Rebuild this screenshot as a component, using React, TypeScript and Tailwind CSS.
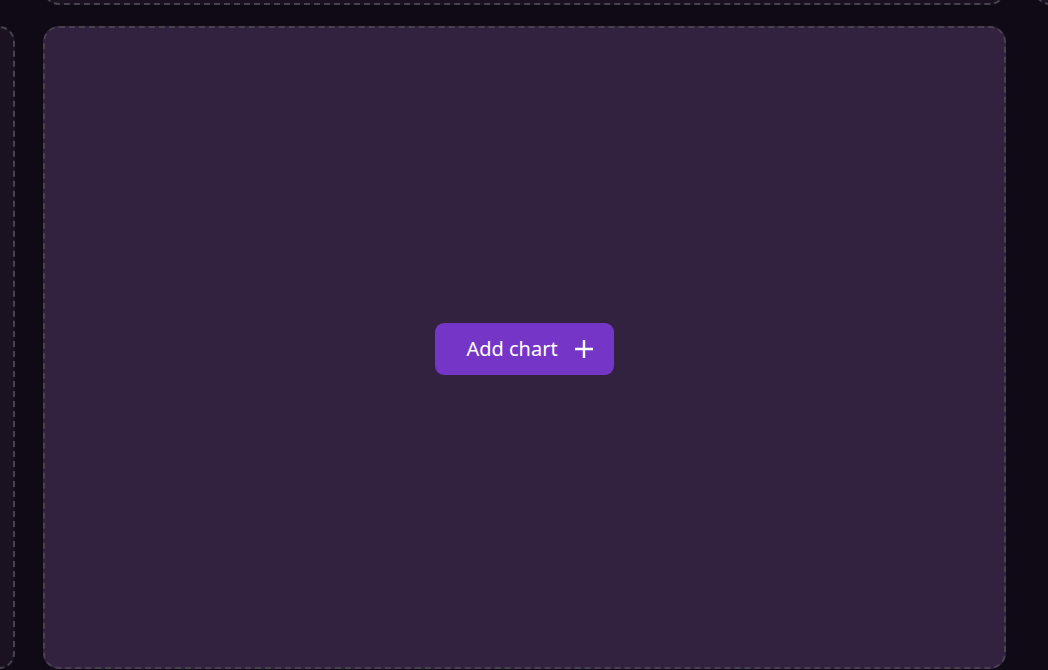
import { useState } from 'react'

function Panel({ className = '', children }: { className?: string; children?: React.ReactNode }) {
  return (
    <div className={`shrink-0 rounded-[16px] border-2 border-dashed border-[#46434e] ${className}`}>
      {children}
    </div>
  )
}

export default function App() {
  const [charts, setCharts] = useState(0)

  return (
    <div className="w-[1048px] h-[670px] overflow-hidden bg-[#100a17] font-['Noto_Sans',sans-serif]">
      <div className="flex flex-col gap-[21px] ml-[-185px] mt-[-200px]">
        <div className="flex gap-[28px] h-[205px]">
          <div className="w-[200px] shrink-0" />
          <Panel className="w-[963px] bg-[#1a1221]" />
          <Panel className="w-[963px] bg-[#1a1221]" />
        </div>
        <div className="flex gap-[28px] h-[643px]">
          <Panel className="w-[200px] bg-[#1a1221]" />
          <Panel className="w-[963px] bg-[#33223f] flex items-center justify-center">
            <button
              type="button"
              onClick={() => setCharts(charts + 1)}
              className="h-[52px] flex items-center gap-[17px] pl-[31px] pr-[21px] rounded-[9px] bg-[#7535c7] text-white text-[20px] leading-none mt-[2px]"
            >
              Add chart
              <svg width="18" height="18" viewBox="0 0 18 18" fill="none" stroke="currentColor" strokeWidth="2.4">
                <path d="M0 9h18M9 0v18" />
              </svg>
            </button>
          </Panel>
        </div>
      </div>
    </div>
  )
}
